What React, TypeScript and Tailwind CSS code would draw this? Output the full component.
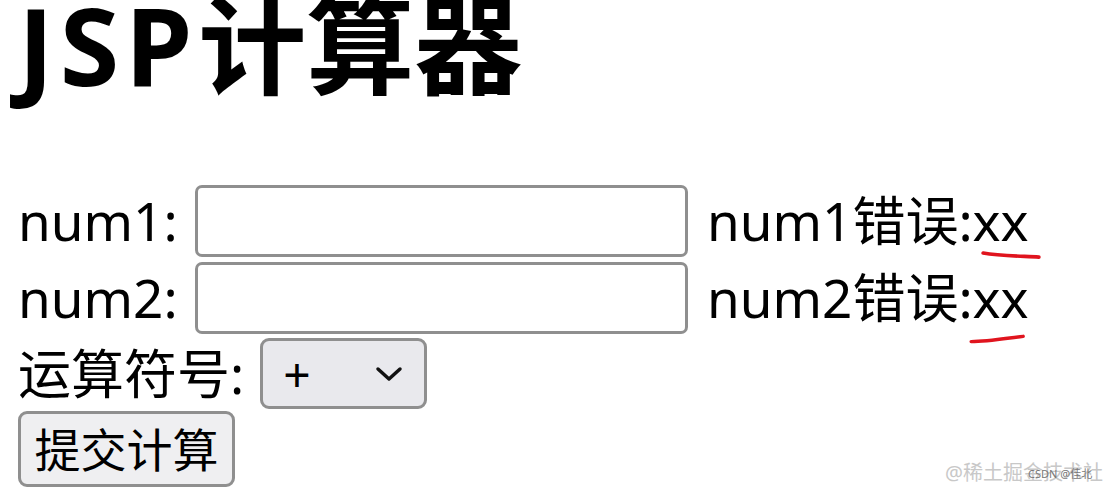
const zh = "font-['Noto_Sans','Noto_Sans_CJK_SC',sans-serif]";

function Scribble({ className }: { className: string }) {
  // red pen stroke under the error value
  return (
    <svg className={className} viewBox="0 0 60 12" fill="none">
      <path d="M3 5 C 20 8, 40 8, 57 9" stroke="#e0141e" strokeWidth="3.5" strokeLinecap="round" />
    </svg>
  );
}

function NumRow({ label, error }: { label: string; error: string }) {
  return (
    <div className="flex h-[77px] items-center">
      <span className="w-[159px]">{label}</span>
      <input
        type="text"
        className="ml-[18px] h-[72px] w-[493px] rounded-[7px] border-[3px] border-[#8f8f8f] bg-white outline-none"
      />
      <span className="ml-[19px]">{error}</span>
    </div>
  );
}

export default function App() {
  return (
    <div className={`relative h-[489px] w-[1111px] overflow-hidden bg-white text-black ${zh}`}>
      <div className="flex flex-col px-[18px]">
        <h1 className="mt-[-9px] h-[107px] text-[108px] leading-none font-bold">
          <span className="tracking-[6px]">JSP</span>计算器
        </h1>

        <div className="mt-[84px] flex flex-col text-[53px] leading-none">
          <NumRow label="num1:" error="num1错误:xx" />
          <NumRow label="num2:" error="num2错误:xx" />

          <div className="flex h-[75px] items-center">
            <span>运算符号:</span>
            <div className="ml-[16px] flex h-[71px] w-[167px] items-center justify-between rounded-[9px] border-[3px] border-[#8f8f8f] bg-[#e9e9ed] pr-[21px] pl-[20px]">
              <span className="text-[48px]">+</span>
              <svg width="28" height="16" viewBox="0 0 28 16" fill="none">
                <path d="M3 3 L14 13 L25 3" stroke="#111" strokeWidth="3.5" strokeLinecap="round" strokeLinejoin="round" />
              </svg>
            </div>
          </div>

          <div className="flex">
            <button className="h-[76px] w-[217px] rounded-[9px] border-[3px] border-[#8f8f8f] bg-[#efeff1] text-[46px]">
              提交计算
            </button>
          </div>
        </div>
      </div>

      <Scribble className="absolute top-[247px] left-[980px] h-[14px] w-[62px]" />
      <Scribble className="absolute top-[330px] left-[968px] h-[16px] w-[58px] -rotate-[10deg]" />

      <div className="absolute top-[458px] left-[945px] text-[20px] text-[#c8c8c8]">@稀土掘金技术社区</div>
      <div className="absolute top-[466px] left-[1028px] text-[11px] text-[#777]">CSDN @佳北</div>
    </div>
  );
}
